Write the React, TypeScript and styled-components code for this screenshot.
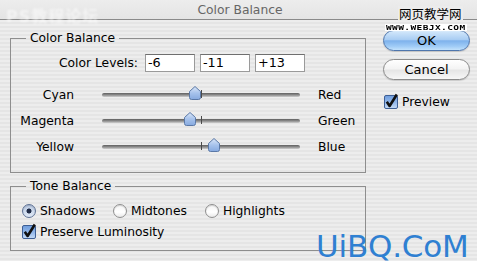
import React from "react";
import styled, { createGlobalStyle } from "styled-components";

const Global = createGlobalStyle`
  html, body { margin: 0; padding: 0; background: #e9e9e9; }
  body { font-family: "DejaVu Sans", "Noto Sans CJK SC", sans-serif; }
  * { box-sizing: border-box; }
`;

const Window = styled.div`
  position: relative;
  width: 477px;
  height: 261px;
  overflow: hidden;
  display: flex;
  flex-direction: column;
  font-size: 12.3px;
  color: #000;
  background: repeating-linear-gradient(to bottom, #ededed 0 2px, #e5e5e5 2px 4px);
`;

const TitleBar = styled.div`
  height: 20px;
  flex: none;
  display: flex;
  align-items: center;
  justify-content: center;
  background: linear-gradient(#ededed, #e4e4e4);
  border-bottom: 1px solid #8a8a8a;
  color: #666;
  font-size: 12.3px;
  line-height: 18px;
  padding-left: 3px;
`;

const Body = styled.div`
  display: flex;
  gap: 17px;
  padding: 10px 0 0 10px;
`;

const Main = styled.div`
  width: 356px;
  display: flex;
  flex-direction: column;
  gap: 5px;
`;

const Group = styled.fieldset<{ $pb: number }>`
  margin: 0;
  padding: 0 0 ${(p) => p.$pb}px 0;
  border: 1px solid #8e8e8e;
  min-width: 0;
`;

const Legend = styled.legend`
  margin-left: 15px;
  padding: 0 4px;
  line-height: 16px;
  font-size: 12.3px;
`;

const LevelsRow = styled.div`
  display: flex;
  align-items: center;
  gap: 5px;
  margin-top: 8px;
  margin-bottom: 10px;
`;

const LevelsLabel = styled.span`
  width: 127px;
  margin-right: 2px;
  text-align: right;
  line-height: 16px;
`;

const Field = styled.div`
  width: 50px;
  height: 18px;
  background: #fff;
  border: 1px solid #9a9a9a;
  border-top-color: #6f6f6f;
  padding-left: 2px;
  line-height: 16px;
  font-size: 12.8px;
`;

const SliderRow = styled.div`
  display: flex;
  align-items: center;
  height: 26px;
`;

const LeftLabel = styled.span`
  width: 63px;
  text-align: right;
  line-height: 16px;
`;

const RightLabel = styled.span`
  margin-left: 18px;
  line-height: 16px;
`;

const Track = styled.div`
  position: relative;
  margin-left: 28px;
  width: 198px;
  height: 4px;
  border-radius: 2px;
  background: linear-gradient(#5f5f5f, #8d8d8d 50%, #cfcfcf);
`;

const Tick = styled.div`
  position: absolute;
  left: 99px;
  top: -3px;
  width: 1px;
  height: 8px;
  background: #4a4a4a;
`;

const Thumb = styled.svg`
  position: absolute;
  top: -7px;
  width: 12px;
  height: 14px;
  transform: translateX(-50%);
  overflow: visible;
`;

const RadioRow = styled.div`
  display: flex;
  align-items: center;
  gap: 18px;
  margin: 9px 0 0 11px;
  height: 16px;
`;

const Option = styled.label`
  display: flex;
  align-items: center;
  gap: 4px;
  line-height: 16px;
`;

const RadioDot = styled.span<{ $on?: boolean }>`
  width: 14px;
  height: 14px;
  border-radius: 50%;
  border: 1px solid ${(p) => (p.$on ? "#5d7194" : "#8f8f8f")};
  background: ${(p) =>
    p.$on
      ? "radial-gradient(circle at 50% 50%, #1f2b45 0 2.2px, transparent 2.8px), linear-gradient(#b9c9e2, #dfe8f5)"
      : "linear-gradient(#f4f4f4, #ffffff 60%, #e9e9e9)"};
  box-shadow: inset 0 1px 1px rgba(0, 0, 0, 0.15);
`;

const CheckRow = styled.div<{ $ml: number; $mt: number }>`
  display: flex;
  align-items: center;
  gap: 4px;
  margin: ${(p) => p.$mt}px 0 0 ${(p) => p.$ml}px;
  height: 16px;
  line-height: 16px;
`;

const Side = styled.div`
  width: 87px;
  display: flex;
  flex-direction: column;
`;

const Button = styled.div<{ $primary?: boolean; $mt: number }>`
  height: 21px;
  margin-top: ${(p) => p.$mt}px;
  border-radius: 11px;
  display: flex;
  align-items: center;
  justify-content: center;
  font-size: 13px;
  line-height: 16px;
  border: 1px solid ${(p) => (p.$primary ? "#4f76ad" : "#8b8b8b")};
  background: ${(p) =>
    p.$primary
      ? "linear-gradient(#d4e8fb 0%, #a9cdf3 45%, #7eb2ec 52%, #9fcbf6 80%, #c3e2fc 100%)"
      : "linear-gradient(#ffffff 0%, #f4f4f4 45%, #e6e6e6 55%, #f7f7f7 100%)"};
  box-shadow: 0 1px 1px rgba(0, 0, 0, 0.15);
`;

const CheckIcon = styled.svg`
  width: 14px;
  height: 14px;
  overflow: visible;
  flex: none;
`;

const MarkTopLeft = styled.div`
  position: absolute;
  left: 6px;
  top: 3px;
  font-size: 16px;
  font-weight: bold;
  color: rgba(255, 255, 255, 0.55);
  letter-spacing: 1px;
  filter: blur(0.8px);
`;

const MarkCN = styled.div`
  position: absolute;
  left: 398px;
  top: 6px;
  font-family: "Noto Sans CJK SC", sans-serif;
  font-size: 12.5px;
  line-height: 16px;
  color: #000;
  background: #ececec;
  padding: 0 1px;
`;

const MarkURL = styled.div`
  position: absolute;
  left: 385px;
  top: 23px;
  font-family: "DejaVu Sans Mono", monospace;
  font-weight: bold;
  font-size: 9.5px;
  line-height: 9px;
  color: #000;
  background: #fff;
  padding: 0 1px;
  letter-spacing: 0.4px;
  transform: scaleY(0.8);
`;

const MarkBig = styled.div`
  position: absolute;
  left: 316px;
  top: 232px;
  font-family: "DejaVu Sans", sans-serif;
  font-size: 31px;
  line-height: 28px;
  letter-spacing: -0.2px;
  white-space: nowrap;
  color: #2f80d2;
`;

const sliders = [
  { left: "Cyan", right: "Red", value: -6 },
  { left: "Magenta", right: "Green", value: -11 },
  { left: "Yellow", right: "Blue", value: 13 },
];

function SliderThumb({ value }: { value: number }) {
  const pct = ((value + 100) / 200) * 100;
  return (
    <Thumb viewBox="0 0 12 14" style={{ left: `${pct}%` }}>
      <defs>
        <linearGradient id="tg" x1="0" y1="0" x2="0" y2="1">
          <stop offset="0" stopColor="#dbe7f8" />
          <stop offset="0.5" stopColor="#a7c3ec" />
          <stop offset="1" stopColor="#86a9df" />
        </linearGradient>
      </defs>
      <path
        d="M6 0.5 L11.5 5.5 L11.5 11.5 Q11.5 13.5 9.5 13.5 L2.5 13.5 Q0.5 13.5 0.5 11.5 L0.5 5.5 Z"
        fill="url(#tg)"
        stroke="#5a78a6"
        strokeWidth="1"
      />
    </Thumb>
  );
}

function Checkbox() {
  return (
    <CheckIcon viewBox="0 0 14 14">
      <defs>
        <linearGradient id="cg" x1="0" y1="0" x2="0" y2="1">
          <stop offset="0" stopColor="#6f9ddc" />
          <stop offset="0.5" stopColor="#8fb5ea" />
          <stop offset="1" stopColor="#c6dcf7" />
        </linearGradient>
      </defs>
      <rect x="0.5" y="0.5" width="13" height="13" rx="1.5" fill="url(#cg)" stroke="#3e5f95" />
      <path d="M2.8 6.8 L5.6 11 L12.8 -0.5" fill="none" stroke="#111" strokeWidth="2.6" strokeLinejoin="round" />
    </CheckIcon>
  );
}

export default function App() {
  return (
    <>
      <Global />
      <Window>
        <TitleBar>Color Balance</TitleBar>
        <Body>
          <Main>
            <Group $pb={12}>
              <Legend>Color Balance</Legend>
              <LevelsRow>
                <LevelsLabel>Color Levels:</LevelsLabel>
                <Field>-6</Field>
                <Field>-11</Field>
                <Field>+13</Field>
              </LevelsRow>
              {sliders.map((s) => (
                <SliderRow key={s.left}>
                  <LeftLabel>{s.left}</LeftLabel>
                  <Track>
                    <Tick />
                    <SliderThumb value={s.value} />
                  </Track>
                  <RightLabel>{s.right}</RightLabel>
                </SliderRow>
              ))}
            </Group>
            <Group $pb={10}>
              <Legend>Tone Balance</Legend>
              <RadioRow>
                <Option>
                  <RadioDot $on />
                  Shadows
                </Option>
                <Option>
                  <RadioDot />
                  Midtones
                </Option>
                <Option>
                  <RadioDot />
                  Highlights
                </Option>
              </RadioRow>
              <CheckRow $ml={11} $mt={5}>
                <Checkbox />
                Preserve Luminosity
              </CheckRow>
            </Group>
          </Main>
          <Side>
            <Button $primary $mt={0}>OK</Button>
            <Button $mt={8}>Cancel</Button>
            <CheckRow $ml={1} $mt={14}>
              <Checkbox />
              Preview
            </CheckRow>
          </Side>
        </Body>
        <MarkTopLeft>PS教程论坛</MarkTopLeft>
        <MarkCN>网页教学网</MarkCN>
        <MarkURL>WWW.WEBJX.COM</MarkURL>
        <MarkBig>UiBQ.CoM</MarkBig>
      </Window>
    </>
  );
}
